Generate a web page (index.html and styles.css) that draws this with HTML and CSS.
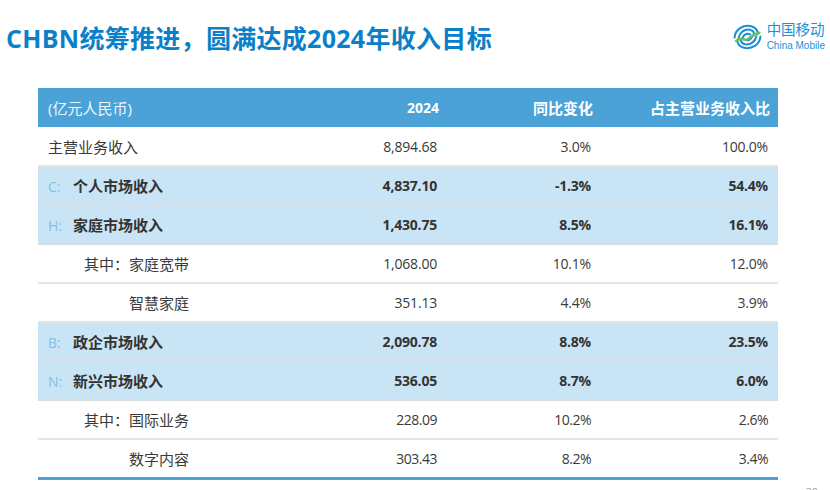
FILE: index.html
```html
<!DOCTYPE html>
<html lang="zh-CN">
<head>
<meta charset="utf-8">
<title>CHBN</title>
<link rel="stylesheet" href="styles.css">
</head>
<body>
<div class="slide">
  <header class="top">
    <h1 class="title">CHBN统筹推进，圆满达成2024年收入目标</h1>
    <div class="logo">
      <svg class="logo-mark" viewBox="0 0 30 27" width="31" height="28">
        <g fill="none" stroke="#1b8fd8" stroke-width="2" stroke-linecap="round">
          <path d="M2.5 14 C3 6 11 1.5 18.5 3 C23 4 25.5 7.5 24.5 11"/>
          <path d="M6.5 14 C7.5 9 12 5.5 17.5 6.5 C20.5 7.2 22 9.5 21 12"/>
          <path d="M10.5 14 C11.5 11 14.5 9.5 17.5 11"/>
          <g transform="rotate(180 15 13.5)">
            <path d="M2.5 14 C3 6 11 1.5 18.5 3 C23 4 25.5 7.5 24.5 11"/>
            <path d="M6.5 14 C7.5 9 12 5.5 17.5 6.5 C20.5 7.2 22 9.5 21 12"/>
            <path d="M10.5 14 C11.5 11 14.5 9.5 17.5 11"/>
          </g>
        </g>
        <path d="M4 17.5 C8.5 12.5 12.5 18.5 16 15 C19 12 22.5 10.5 26.5 9.5" fill="none" stroke="#6cc24a" stroke-width="2.4" stroke-linecap="round"/>
      </svg>
      <div class="logo-text">
        <div class="logo-cn">中国移动</div>
        <div class="logo-en">China Mobile</div>
      </div>
    </div>
  </header>

  <table class="data">
    <colgroup>
      <col class="c1"><col class="c2"><col class="c3"><col class="c4">
    </colgroup>
    <thead>
      <tr>
        <th class="lbl">(亿元人民币)</th>
        <th class="num">2024</th>
        <th>同比变化</th>
        <th>占主营业务收入比</th>
      </tr>
    </thead>
    <tbody>
      <tr class="plain">
        <td class="lbl">主营业务收入</td><td>8,894.68</td><td>3.0%</td><td>100.0%</td>
      </tr>
      <tr class="hl">
        <td class="lbl"><span class="pre">C:</span>个人市场收入</td><td>4,837.10</td><td>-1.3%</td><td>54.4%</td>
      </tr>
      <tr class="hl">
        <td class="lbl"><span class="pre">H:</span>家庭市场收入</td><td>1,430.75</td><td>8.5%</td><td>16.1%</td>
      </tr>
      <tr class="plain">
        <td class="lbl sub">其中：家庭宽带</td><td>1,068.00</td><td>10.1%</td><td>12.0%</td>
      </tr>
      <tr class="plain">
        <td class="lbl sub2">智慧家庭</td><td>351.13</td><td>4.4%</td><td>3.9%</td>
      </tr>
      <tr class="hl">
        <td class="lbl"><span class="pre">B:</span>政企市场收入</td><td>2,090.78</td><td>8.8%</td><td>23.5%</td>
      </tr>
      <tr class="hl">
        <td class="lbl"><span class="pre">N:</span>新兴市场收入</td><td>536.05</td><td>8.7%</td><td>6.0%</td>
      </tr>
      <tr class="plain narrow">
        <td class="lbl sub">其中：国际业务</td><td>228.09</td><td>10.2%</td><td>2.6%</td>
      </tr>
      <tr class="plain narrow last">
        <td class="lbl sub2">数字内容</td><td>303.43</td><td>8.2%</td><td>3.4%</td>
      </tr>
    </tbody>
  </table>
  <div class="pageno">30</div>
</div>
</body>
</html>
```

FILE: styles.css
```css
* { box-sizing: border-box; }
html, body { margin: 0; padding: 0; background: #ffffff; }
body {
  width: 830px;
  height: 490px;
  overflow: hidden;
  font-family: "Open Sans", "Noto Sans CJK SC", sans-serif;
  color: #3a3a3a;
}
.slide {
  position: relative;
  width: 830px;
  height: 490px;
}
.top {
  display: flex;
  justify-content: space-between;
  align-items: flex-start;
  height: 88px;
}
.title {
  margin: 20px 0 0 6px;
  font-family: "Open Sans", "Noto Sans CJK SC", sans-serif;
  font-size: 25px;
  font-weight: 700;
  color: #0b80c8;
  letter-spacing: 0.3px;
  line-height: 36px;
}
.logo {
  display: flex;
  align-items: center;
  gap: 4px;
  margin: 22px 5px 0 0;
}
.logo-mark { display: block; }
.logo-text {
  display: flex;
  flex-direction: column;
  color: #1b8fd8;
}
.logo-cn {
  font-family: "Noto Sans CJK SC", sans-serif;
  font-size: 14.5px;
  line-height: 14px;
}
.logo-en {
  font-family: "Liberation Sans", sans-serif;
  font-size: 10px;
  line-height: 12px;
  margin-top: 4px;
}

.data {
  margin-left: 38px;
  width: 740px;
  border-collapse: collapse;
  table-layout: fixed;
  font-size: 14px;
}
.c1 { width: 250px; }
.c2 { width: 159px; }
.c3 { width: 154px; }
.c4 { width: 177px; }

.data th {
  height: 39px;
  padding: 0 8px 0 0;
  background: #4aa2d7;
  color: #ffffff;
  font-size: 15px;
  font-weight: 700;
  text-align: right;
  vertical-align: middle;
}
.data th.num { font-size: 14px; }
.data th.lbl {
  text-align: left;
  font-weight: 400;
  padding-left: 10px;
  color: #eef6fc;
}
.data td {
  height: 39px;
  padding: 0 10px 0 0;
  text-align: right;
  vertical-align: middle;
  letter-spacing: -0.2px;
  border-bottom: 2px solid #e2e6e9;
}
.data td.lbl {
  text-align: left;
  padding-left: 10px;
  font-size: 15px;
  letter-spacing: 0;
}
.data tr.hl td {
  background: #c9e4f4;
  font-weight: 700;
  color: #333333;
  border-bottom-color: #d6dee5;
}
.data tr.plain td { background: #ffffff; }
.pre {
  display: inline-block;
  width: 25px;
  font-size: 14px;
  color: #82c1e8;
  font-weight: 400;
}
.data td.sub { padding-left: 46px; }
.data td.sub2 { padding-left: 91px; }
.data tr.narrow td { letter-spacing: -0.5px; }
.data tr.narrow td.lbl { letter-spacing: 0; }
.data tr.last td {
  border-bottom: 3px solid #4aa2d7;
}
.pageno {
  position: absolute;
  right: 12px;
  bottom: -9px;
  font-size: 11px;
  color: #9aa4ab;
}
```
